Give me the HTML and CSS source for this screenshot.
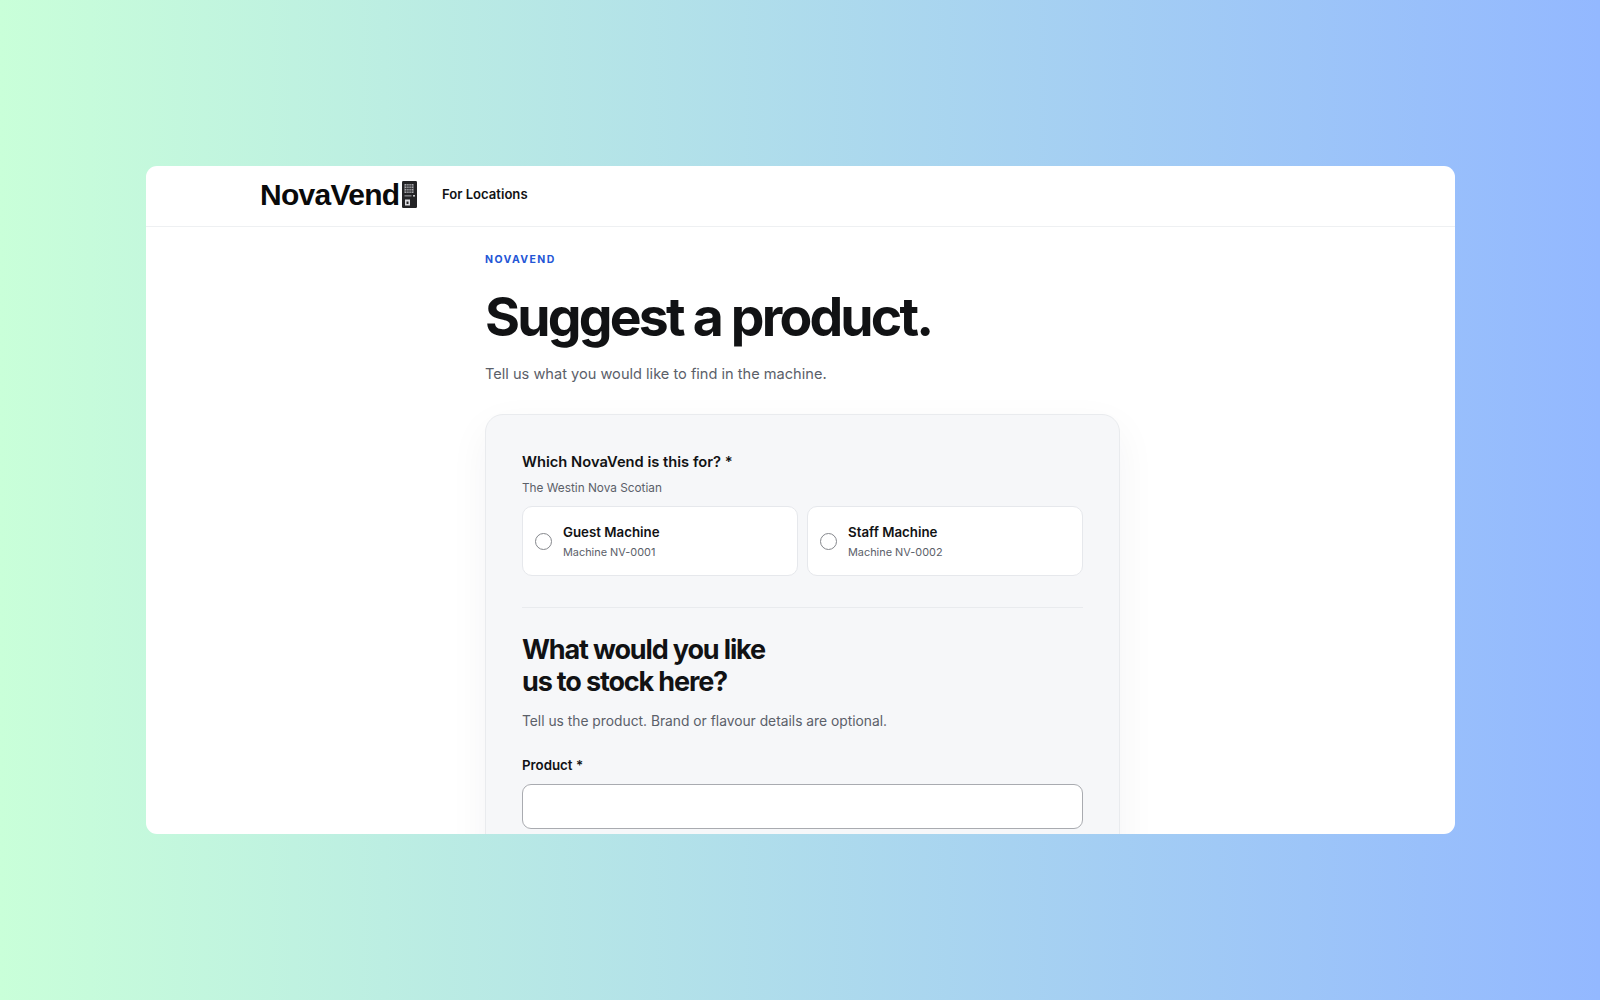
FILE: index.html
```html
<!DOCTYPE html>
<html lang="en">
<head>
<meta charset="utf-8">
<title>NovaVend - Suggest a product</title>
<link rel="stylesheet" href="styles.css">
</head>
<body>
<div class="window">
  <header class="topbar">
    <a class="brand">NovaVend<svg class="brand-icon" viewBox="0 0 15 27" aria-hidden="true">
      <rect x="0" y="0" width="15" height="27" rx="1.2" fill="#232325"/>
      <rect x="2.5" y="3" width="9" height="9" fill="#a9a9ad"/>
      <path d="M2.5 5h9M2.5 7.5h9M2.5 10h9M4.8 3v9M7 3v9M9.2 3v9" stroke="#2a2a2c" stroke-width=".8" fill="none"/>
      <rect x="2.5" y="14" width="7" height="1.6" fill="#77777b"/>
      <rect x="11" y="14" width="2" height="1.6" fill="#c8c8cb"/>
      <rect x="3" y="18.5" width="5" height="6" fill="#dcdce0"/>
      <rect x="4.5" y="20.5" width="2" height="2.5" fill="#232325"/>
    </svg></a>
    <nav class="nav"><a class="nav-link">For Locations</a></nav>
  </header>
  <main class="content">
    <p class="eyebrow">NOVAVEND</p>
    <h1 class="title">Suggest a product.</h1>
    <p class="lede">Tell us what you would like to find in the machine.</p>
    <form class="card">
      <div class="q-label">Which NovaVend is this for? *</div>
      <div class="q-sub">The Westin Nova Scotian</div>
      <div class="options">
        <label class="option"><span class="radio"></span><span class="opt-text"><span class="opt-name">Guest Machine</span><span class="opt-meta">Machine NV-0001</span></span></label>
        <label class="option"><span class="radio"></span><span class="opt-text"><span class="opt-name">Staff Machine</span><span class="opt-meta">Machine NV-0002</span></span></label>
      </div>
      <hr class="divider">
      <h2 class="subtitle">What would you like<br>us to stock here?</h2>
      <p class="help">Tell us the product. Brand or flavour details are optional.</p>
      <div class="field-label">Product *</div>
      <div class="input"></div>
      <div class="spacer"></div>
    </form>
  </main>
</div>
</body>
</html>
```
FILE: styles.css
```css
* { box-sizing: border-box; }
html, body { margin: 0; height: 100%; }
body {
  height: 1000px;
  overflow: hidden;
  display: flex;
  align-items: center;
  justify-content: center;
  background: linear-gradient(90deg, #c9ffd9 0%, #93b8ff 100%);
  font-family: Inter, "Liberation Sans", sans-serif;
  color: #111214;
}
.window {
  width: 1309px;
  height: 668px;
  margin-left: 1px;
  background: #fff;
  border-radius: 11px;
  overflow: hidden;
}
.topbar {
  height: 61px;
  border-bottom: 1px solid #eef0f2;
  padding: 14px 0 0 114px;
  display: flex;
  align-items: flex-start;
  gap: 24.5px;
}
.brand {
  display: flex;
  align-items: center;
  gap: 3px;
  font-family: "Liberation Sans", Inter, sans-serif;
  font-size: 30px;
  line-height: 29px;
  font-weight: 700;
  letter-spacing: -0.7px;
  color: #0a0a0a;
}
.brand-icon { width: 15px; height: 27px; display: block; }
.nav { padding-top: 3px; }
.nav-link { font-size: 13.1px; line-height: 18px; font-weight: 600; color: #111214; }
.content { width: 635px; margin-left: 339px; padding-top: 26px; }
.eyebrow {
  margin: 0;
  font-size: 10.5px;
  line-height: 14px;
  font-weight: 700;
  letter-spacing: 1.4px;
  color: #2456d6;
}
.title {
  margin: 18px 0 0;
  font-size: 53.5px;
  line-height: 64px;
  font-weight: 700;
  letter-spacing: -2.8px;
  color: #111214;
}
.lede { margin: 13px 0 0; font-size: 14.6px; line-height: 24px; color: #5b6069; }
.card {
  margin-top: 28px;
  background: #f6f7f9;
  border: 1px solid #e9ebee;
  border-radius: 18px;
  padding: 37px 36px;
  box-shadow: 0 14px 40px rgba(20, 30, 50, 0.05);
}
.q-label { font-size: 14.7px; line-height: 20px; font-weight: 600; }
.q-sub { margin-top: 7px; font-size: 11.8px; line-height: 18px; color: #5b6069; }
.options { margin-top: 9px; display: grid; grid-template-columns: 1fr 1fr; gap: 9px; }
.option {
  height: 70px;
  background: #fff;
  border: 1px solid #e6e8ec;
  border-radius: 10px;
  display: flex;
  align-items: center;
  gap: 11px;
  padding-left: 12px;
}
.radio { width: 17px; height: 17px; border: 1.3px solid #85878c; border-radius: 50%; background: #fff; flex: none; }
.opt-text { display: flex; flex-direction: column; gap: 3px; padding-top: 1px; }
.opt-name { font-size: 13.3px; line-height: 18px; font-weight: 600; }
.opt-meta { font-size: 10.9px; line-height: 16px; color: #5b6069; }
.divider { margin: 31px 0 0; border: 0; border-top: 1px solid #e9ebee; }
.subtitle {
  margin: 26px 0 0;
  font-size: 27px;
  line-height: 32px;
  font-weight: 700;
  letter-spacing: -1.15px;
}
.help { margin: 12px 0 0; font-size: 13.8px; line-height: 22px; color: #5b6069; }
.field-label { margin-top: 24px; font-size: 13.3px; line-height: 18px; font-weight: 600; }
.input { margin-top: 10px; height: 45px; background: #fff; border: 1px solid #a9abb0; border-radius: 9px; }
.spacer { height: 40px; }
```
